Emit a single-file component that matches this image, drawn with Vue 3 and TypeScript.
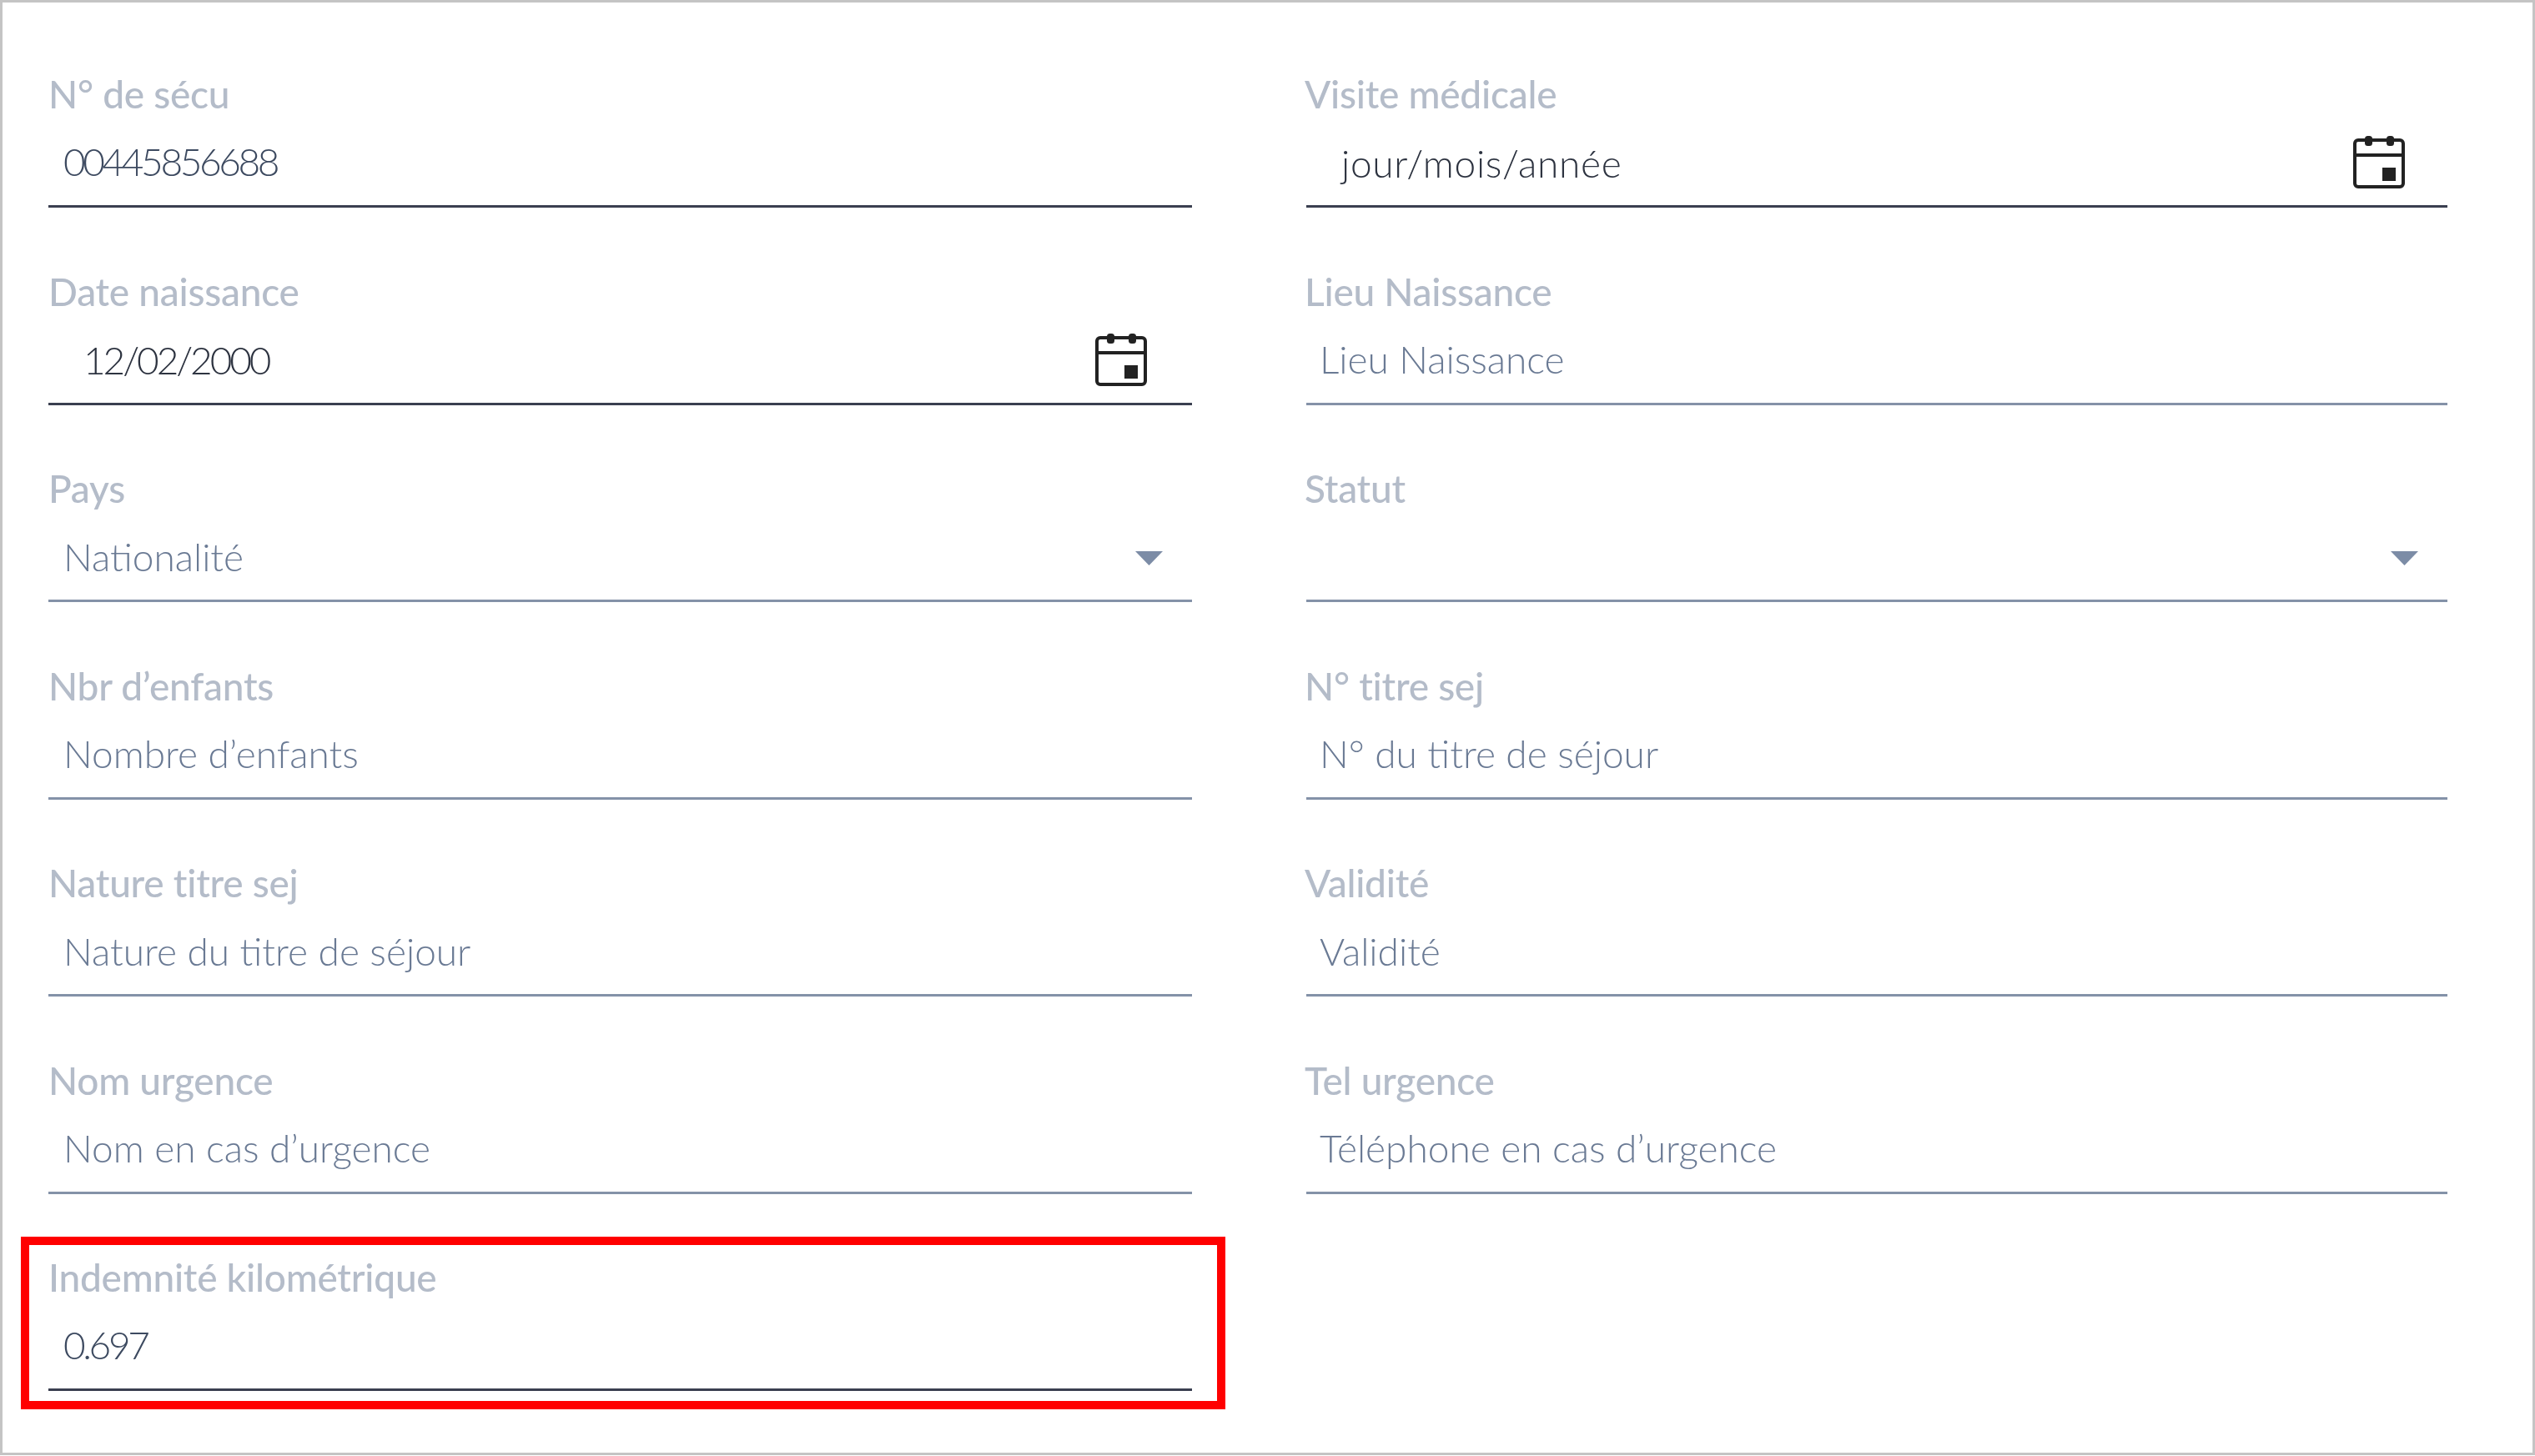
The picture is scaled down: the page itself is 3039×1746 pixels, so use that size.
<script setup lang="ts">
interface Field {
  label: string
  value: string
  kind: 'filled' | 'placeholder' | 'date' | 'select'
  digits?: boolean
}

const fields: Field[] = [
  { label: 'N° de sécu', value: '00445856688', kind: 'filled', digits: true },
  { label: 'Visite médicale', value: 'jour/mois/année', kind: 'date' },
  { label: 'Date naissance', value: '12/02/2000', kind: 'date', digits: true },
  { label: 'Lieu Naissance', value: 'Lieu Naissance', kind: 'placeholder' },
  { label: 'Pays', value: 'Nationalité', kind: 'select' },
  { label: 'Statut', value: '', kind: 'select' },
  { label: 'Nbr d’enfants', value: 'Nombre d’enfants', kind: 'placeholder' },
  { label: 'N° titre sej', value: 'N° du titre de séjour', kind: 'placeholder' },
  { label: 'Nature titre sej', value: 'Nature du titre de séjour', kind: 'placeholder' },
  { label: 'Validité', value: 'Validité', kind: 'placeholder' },
  { label: 'Nom urgence', value: 'Nom en cas d’urgence', kind: 'placeholder' },
  { label: 'Tel urgence', value: 'Téléphone en cas d’urgence', kind: 'placeholder' },
  { label: 'Indemnité kilométrique', value: '0.697', kind: 'filled', digits: true },
]
</script>

<template>
  <main class="sheet">
    <div class="form">
      <div
        v-for="(f, i) in fields"
        :key="f.label"
        class="field"
        :class="[f.kind, { marked: i === fields.length - 1, digits: f.digits }]"
      >
        <label class="label">{{ f.label }}</label>
        <div class="control">
          <span class="value">{{ f.value }}</span>
          <svg v-if="f.kind === 'date'" class="cal" viewBox="0 0 64 64" aria-hidden="true">
            <rect x="3" y="6" width="58" height="56" rx="4" fill="none" stroke="#222" stroke-width="4" />
            <path d="M3 24H61" fill="none" stroke="#222" stroke-width="4" />
            <rect x="15" y="1" width="9" height="12" rx="3.5" fill="#222" />
            <rect x="41" y="1" width="9" height="12" rx="3.5" fill="#222" />
            <rect x="36" y="39" width="16" height="16" fill="#222" />
          </svg>
          <svg v-if="f.kind === 'select'" class="arrow" viewBox="0 0 33 17" aria-hidden="true">
            <path d="M0 0H33L16.5 17Z" fill="#7c8ca6" />
          </svg>
        </div>
      </div>
    </div>
  </main>
</template>

<style>
html, body { margin: 0; background: #fff; }
</style>

<style scoped>
.sheet {
  box-sizing: border-box;
  width: 3039px;
  height: 1745px;
  border: 3px solid #c4c4c4;
  padding: 74px 103px 0 55px;
  background: #fff;
  font-family: Lato, "Open Sans", sans-serif;
}
.form {
  display: grid;
  grid-template-columns: 1371px 1368px;
  column-gap: 137px;
  grid-auto-rows: 236.5px;
}
.field {
  position: relative;
  display: flex;
  flex-direction: column;
  height: 172px;
}
.label {
  font-size: 46px;
  font-weight: 500;
  line-height: 72px;
  height: 60px;
  color: #b4bcc9;
  letter-spacing: -0.25px;
  filter: blur(0.7px);
}
.field:nth-child(even) .label { margin-left: -2px; }
.control {
  flex: 1;
  display: flex;
  align-items: center;
  border-bottom: 3px solid #8492a8;
  padding: 0 18px;
  position: relative;
}
.field:nth-child(even) .control { padding-left: 16px; }
.value {
  font-size: 46px;
  font-weight: 300;
  color: #6a7a94;
  letter-spacing: 0;
  padding-top: 5px;
  filter: blur(0.4px);
}
.filled .control,
.date .control { border-bottom-color: #3a3f50; }
.filled .value { color: #3d4a60; padding-top: 4px; letter-spacing: -3.4px; }
.field.date .control { padding-left: 42px; }
.date .value { color: #2d3340; letter-spacing: 0.7px; padding-top: 7px; }
.date.digits .value { letter-spacing: -3.1px; }
.cal {
  position: absolute;
  top: 25px;
  width: 64px;
  height: 64px;
}
.field:nth-child(odd) .cal { right: 53px; }
.field:nth-child(even) .cal { right: 50px; }
.arrow {
  position: absolute;
  right: 35px;
  top: 51px;
  width: 33px;
  height: 17px;
}
.marked::before {
  content: "";
  position: absolute;
  left: -33px;
  right: -40px;
  top: -13px;
  bottom: -22px;
  border: 10px solid #ff0000;
  pointer-events: none;
}
</style>
